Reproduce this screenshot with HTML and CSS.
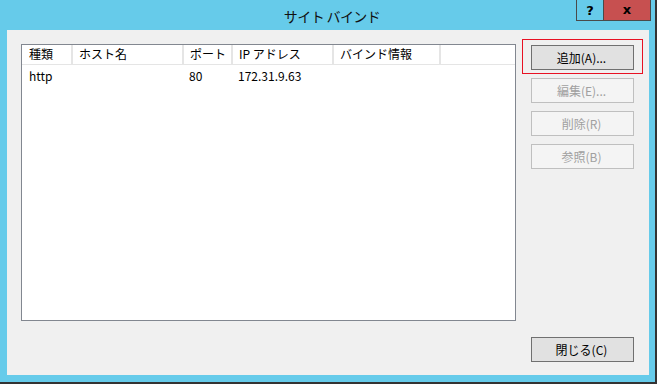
FILE: index.html
```html
<!DOCTYPE html>
<html lang="ja">
<head>
    <meta charset="UTF-8">
    <title>サイト バインド</title>
    <link rel="stylesheet" href="styles.css">
</head>
<body>
    <div class="window">
        <div class="titlebar">
            <span class="title">サイト バインド</span>
            <div class="caption-buttons">
                <span class="cap help">?</span>
                <span class="cap close-x">x</span>
            </div>
        </div>

        <div class="client">
            <div class="listview">
                <table>
                    <thead>
                        <tr>
                            <th class="c-type">種類</th>
                            <th class="c-host">ホスト名</th>
                            <th class="c-port">ポート</th>
                            <th class="c-ip">IP アドレス</th>
                            <th class="c-bind">バインド情報</th>
                            <th class="c-rest"></th>
                        </tr>
                    </thead>
                    <tbody>
                        <tr>
                            <td>http</td>
                            <td></td>
                            <td>80</td>
                            <td>172.31.9.63</td>
                            <td></td>
                            <td></td>
                        </tr>
                    </tbody>
                </table>
            </div>

            <div class="side-buttons">
                <button class="btn focused">追加(A)...</button>
                <button class="btn" disabled>編集(E)...</button>
                <button class="btn" disabled>削除(R)</button>
                <button class="btn" disabled>参照(B)</button>
            </div>

            <div class="footer">
                <button class="btn">閉じる(C)</button>
            </div>
        </div>
    </div>
</body>
</html>
```

FILE: styles.css
```css
* {
    margin: 0;
    padding: 0;
    box-sizing: border-box;
}

body {
    font-family: "Noto Sans CJK JP", "Noto Sans", sans-serif;
    font-size: 12px;
    color: #000;
    background: #333;
    width: 657px;
    height: 384px;
    overflow: hidden;
}

.window {
    width: 655px;
    height: 382px;
    background: #66cbea;
    padding: 0 6px 7px 7px;
    display: flex;
    flex-direction: column;
}

.titlebar {
    position: relative;
    height: 30px;
    display: flex;
    align-items: center;
    justify-content: center;
}

.title {
    font-size: 14px;
    letter-spacing: -0.6px;
    color: #111;
    margin-left: 8px;
    margin-top: 1px;
}

.caption-buttons {
    position: absolute;
    top: 0;
    right: -2px;
    display: flex;
    border: 1px solid #4a4a4a;
    border-top: none;
    height: 21px;
}

.cap {
    display: flex;
    align-items: center;
    justify-content: center;
    font-family: "DejaVu Sans", sans-serif;
    font-weight: bold;
    font-size: 13px;
    height: 20px;
}

.help {
    width: 27px;
    border-right: 1px solid #4a4a4a;
}

.close-x {
    width: 46px;
    background: #c75050;
    padding-bottom: 2px;
}

.client {
    flex: 1;
    background: #f0f0f0;
    padding: 14px 15px 13px 14px;
    display: grid;
    grid-template-columns: 495px 103px;
    grid-template-rows: 277px 25px;
    column-gap: 15px;
    row-gap: 16px;
}

.listview {
    background: #fff;
    border: 1px solid #828790;
    overflow: hidden;
}

table {
    border-collapse: collapse;
    table-layout: fixed;
    width: 100%;
}

th {
    font-weight: normal;
    text-align: left;
    height: 19px;
    padding: 0 0 1px 6px;
    border-right: 2px solid #e5e5e5;
    border-bottom: 1px solid #e5e5e5;
    white-space: nowrap;
}

th.c-rest {
    border-right: none;
}

.c-type { width: 50px; padding-left: 7px; }
.c-host { width: 111px; }
.c-port { width: 49px; }
.c-ip { width: 101px; }
.c-bind { width: 107px; }

td {
    height: 21px;
    padding: 2px 0 0 6px;
    white-space: nowrap;
}

td:first-child {
    padding-left: 7px;
}

.side-buttons {
    display: flex;
    flex-direction: column;
    gap: 8px;
    padding-top: 1px;
}

.btn {
    font-family: inherit;
    font-size: 12px;
    height: 25px;
    width: 103px;
    background: #e1e1e1;
    border: 1px solid #707070;
    color: #000;
    padding: 0 2px 0 0;
}

.btn:disabled {
    background: #f4f4f4;
    border-color: #bfbfbf;
    color: #a0a0a0;
}

.btn.focused {
    position: relative;
}

.btn.focused::after {
    content: "";
    position: absolute;
    left: -10px;
    right: -10px;
    top: -7px;
    bottom: -5px;
    border: 1px solid #e81123;
}

.footer {
    grid-column: 2;
}
```
